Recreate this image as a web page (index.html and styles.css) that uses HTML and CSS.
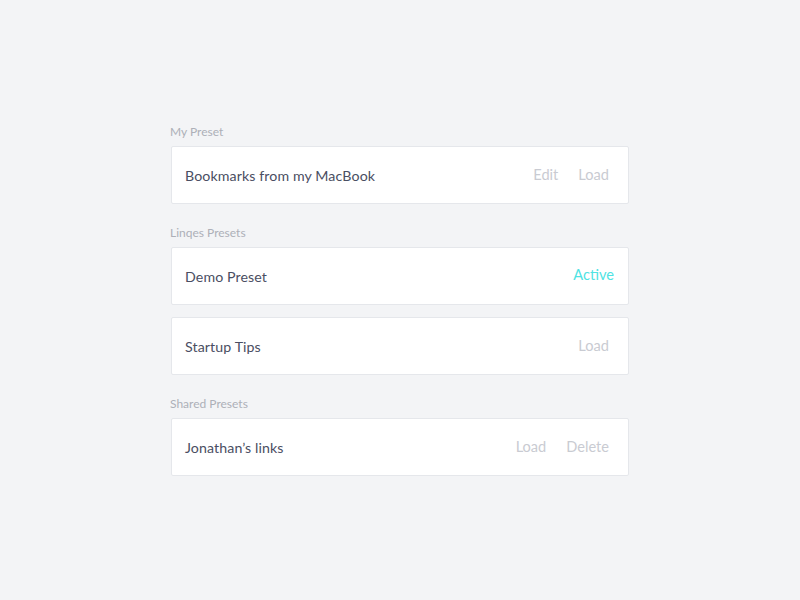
FILE: index.html
```html
<!DOCTYPE html>
<html>
<head>
<meta charset="utf-8">
<link rel="stylesheet" href="styles.css">
</head>
<body>
<main class="presets">
  <section class="group">
    <div class="group-label">My Preset</div>
    <div class="card">
      <span class="name">Bookmarks from my MacBook</span>
      <div class="actions"><span class="action">Edit</span><span class="action">Load</span></div>
    </div>
  </section>
  <section class="group">
    <div class="group-label">Linqes Presets</div>
    <div class="card">
      <span class="name">Demo Preset</span>
      <div class="actions"><span class="action active">Active</span></div>
    </div>
    <div class="card">
      <span class="name">Startup Tips</span>
      <div class="actions"><span class="action">Load</span></div>
    </div>
  </section>
  <section class="group">
    <div class="group-label">Shared Presets</div>
    <div class="card">
      <span class="name">Jonathan’s links</span>
      <div class="actions"><span class="action">Load</span><span class="action">Delete</span></div>
    </div>
  </section>
</main>
</body>
</html>
```
FILE: styles.css
```css
html, body {
  margin: 0;
  padding: 0;
  background: #f3f4f6;
  font-family: Lato, "Open Sans", sans-serif;
}
.presets {
  width: 458px;
  margin: 0 auto;
  padding-top: 124px;
  display: flex;
  flex-direction: column;
  gap: 21px;
}
.group {
  display: flex;
  flex-direction: column;
  gap: 12px;
}
.group-label {
  font-size: 12px;
  line-height: 15px;
  color: #adb0b8;
  margin-left: -1px;
  margin-bottom: -5px;
}
.card {
  box-sizing: border-box;
  height: 58px;
  background: #fff;
  border: 1px solid #e5e7eb;
  border-radius: 2px;
  display: flex;
  align-items: center;
  justify-content: space-between;
  padding: 0 19px 0 13px;
}
.name {
  font-size: 14.2px;
  color: #4a4e62;
  letter-spacing: 0.1px;
}
.actions {
  display: flex;
  gap: 20px;
  font-size: 14.6px;
  color: #c9cbd2;
  margin-top: -2px;
}
.action.active {
  color: #4fe3e3;
  margin-right: -5px;
  margin-top: -1px;
}
```
